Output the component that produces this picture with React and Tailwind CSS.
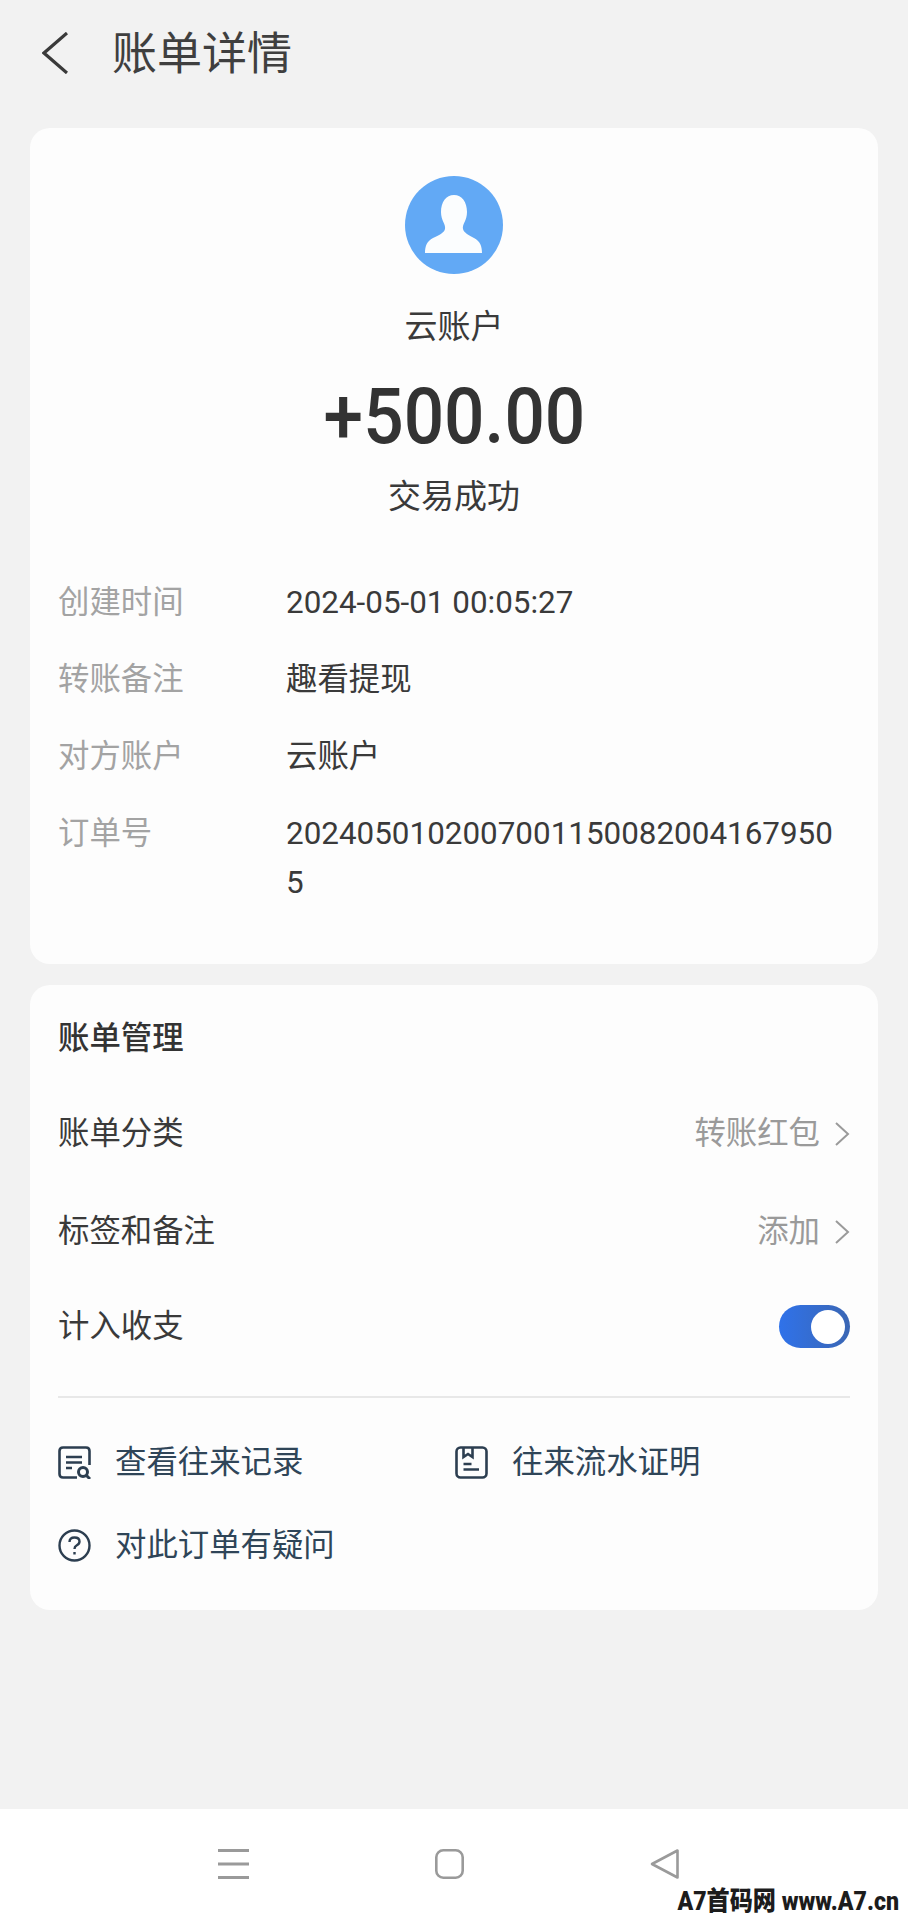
const font = { fontFamily: '"Roboto","Noto Sans CJK SC",sans-serif' };

function InfoRow({ label, children }) {
  return (
    <div className="flex items-start">
      <div className="w-[228px] shrink-0 text-[#a3a3a3]">{label}</div>
      <div className="w-[562px] break-all text-[#3a3a3a]">{children}</div>
    </div>
  );
}

function Chevron() {
  return (
    <svg width="16" height="26" viewBox="0 0 16 26" fill="none" stroke="#9a9a9a" strokeWidth="2" className="ml-[14px]">
      <path d="M2 2 L14 13 L2 24" />
    </svg>
  );
}

function DocIcon() {
  return (
    <svg width="33" height="33" viewBox="0 0 33 33" fill="none" stroke="#2c3e50" strokeWidth="2.6">
      <path d="M19 31.5 H5 Q1.5 31.5 1.5 28 V5 Q1.5 1.5 5 1.5 H28 Q31.5 1.5 31.5 5 V19" />
      <path d="M8 11 H24 M8 16.5 H24 M8 22 H14" />
      <circle cx="25" cy="26" r="4.5" strokeWidth="3" />
      <path d="M28.5 29.5 L32 33" strokeWidth="3" />
    </svg>
  );
}

function ProofIcon() {
  return (
    <svg width="33" height="33" viewBox="0 0 33 33" fill="none" stroke="#2c3e50" strokeWidth="2.6">
      <rect x="1.5" y="1.5" width="30" height="30" rx="4" />
      <path d="M8.5 1.5 V11 L13 8 L17.5 11 V1.5" />
      <path d="M8.5 18 H16.5 M8.5 23.5 H24" />
    </svg>
  );
}

function HelpIcon() {
  return (
    <svg width="33" height="33" viewBox="0 0 33 33" fill="none" stroke="#2c3e50" strokeWidth="2.4">
      <circle cx="16.5" cy="16.5" r="15" />
      <path d="M11.5 13 Q11.5 8.5 16.5 8.5 Q21.5 8.5 21.5 12.5 Q21.5 15 18.5 16.5 Q16.5 17.5 16.5 20" />
      <path d="M16.5 23 V25.5" />
    </svg>
  );
}

function Link({ icon, children, className = "" }) {
  return (
    <div className={"flex items-center gap-[24px] text-[#2f4558] " + className}>
      {icon}
      <span>{children}</span>
    </div>
  );
}

export default function App() {
  return (
    <div style={font} className="flex h-[1920px] w-[908px] flex-col overflow-hidden bg-[#f2f2f2] text-[31.4px] leading-[49px] text-[#3a3a3a]">
      <header className="flex h-[128px] items-start pl-[42px] pt-[32px]">
        <svg width="26" height="42" viewBox="0 0 26 42" fill="none" stroke="#3a3a3a" strokeWidth="3.2">
          <path d="M25 1 L2 21 L25 41" />
        </svg>
        <h1 className="ml-[44px] mt-[2px] text-[45px] leading-[42px] font-normal text-[#3f3f3f]">账单详情</h1>
      </header>

      <main className="flex flex-col gap-[21px] px-[30px]">
        <section className="h-[836px] rounded-[20px] bg-[#fdfdfd] px-[28px] pt-[48px]">
          <div className="flex flex-col items-center">
            <svg width="98" height="98" viewBox="0 0 98 98">
              <circle cx="49" cy="49" r="49" fill="#62a9f5" />
              <path d="M49 19 C41 19 36 26 36 36 C36 45 41 48 40 53 C39 57 34 59 28 62 C22 65 20 70 20 77 H77 C77 70 75 65 69 62 C64 59 59 57 58 53 C57 48 62 45 62 36 C62 26 57 19 49 19 Z" fill="#fbfdfe" />
            </svg>
            <div className="mt-[29px] text-[33px] leading-[48px]">云账户</div>
            <div className="mt-[21px] scale-x-[0.925] text-[77px] leading-[90px] font-medium text-[#333]">+500.00</div>
            <div className="mt-[11px] text-[33px] leading-[48px]">交易成功</div>
          </div>
          <div className="mt-[57px] flex flex-col gap-[28px]">
            <InfoRow label="创建时间">2024-05-01 00:05:27</InfoRow>
            <InfoRow label="转账备注">趣看提现</InfoRow>
            <InfoRow label="对方账户">云账户</InfoRow>
            <InfoRow label="订单号">20240501020070011500820041679505</InfoRow>
          </div>
        </section>

        <section className="h-[625px] rounded-[20px] bg-[#fdfdfd] px-[28px] pt-[29px]">
          <h2 className="text-[31.4px] leading-[49px] font-medium text-[#333]">账单管理</h2>
          <div className="mt-[46px] flex items-center justify-between">
            <span>账单分类</span>
            <span className="flex items-center text-[#9a9a9a]">转账红包<Chevron /></span>
          </div>
          <div className="mt-[49px] flex items-center justify-between">
            <span>标签和备注</span>
            <span className="flex items-center text-[#9a9a9a]">添加<Chevron /></span>
          </div>
          <div className="mt-[46px] flex items-center justify-between">
            <span>计入收支</span>
            <div className="flex h-[43px] w-[71px] items-center justify-end rounded-full bg-gradient-to-r from-[#2f72ea] to-[#3a66b4] pr-[5px]">
              <div className="h-[34px] w-[34px] rounded-full bg-white" />
            </div>
          </div>
          <div className="mt-[45px] h-[2px] bg-[#e8e8e8]" />
          <div className="mt-[40px] flex">
            <Link icon={<DocIcon />} className="w-[397px]">查看往来记录</Link>
            <Link icon={<ProofIcon />}>往来流水证明</Link>
          </div>
          <Link icon={<HelpIcon />} className="mt-[34px]">对此订单有疑问</Link>
        </section>
      </main>

      <footer className="relative mt-auto flex h-[111px] items-start justify-center gap-[186px] bg-white pr-[12px] pt-[40px]">
        <svg width="31" height="30" viewBox="0 0 31 30" fill="none" stroke="#9a9a9a" strokeWidth="3">
          <path d="M0 1.5 H31 M0 15 H31 M0 28.5 H31" />
        </svg>
        <svg width="29" height="30" viewBox="0 0 29 30" fill="none" stroke="#9a9a9a" strokeWidth="2.6">
          <rect x="1.3" y="1.3" width="26.4" height="27.4" rx="7" />
        </svg>
        <svg width="29" height="30" viewBox="0 0 29 30" fill="none" stroke="#9a9a9a" strokeWidth="2.6" strokeLinejoin="round">
          <path d="M27.5 1.5 V28.5 L2 15 Z" />
        </svg>
        <div className="absolute right-[9px] bottom-[4px] origin-right scale-x-[0.89] text-[26px] leading-[30px] font-black text-[#1c1c1c]">A7首码网 www.A7.cn</div>
      </footer>
    </div>
  );
}
